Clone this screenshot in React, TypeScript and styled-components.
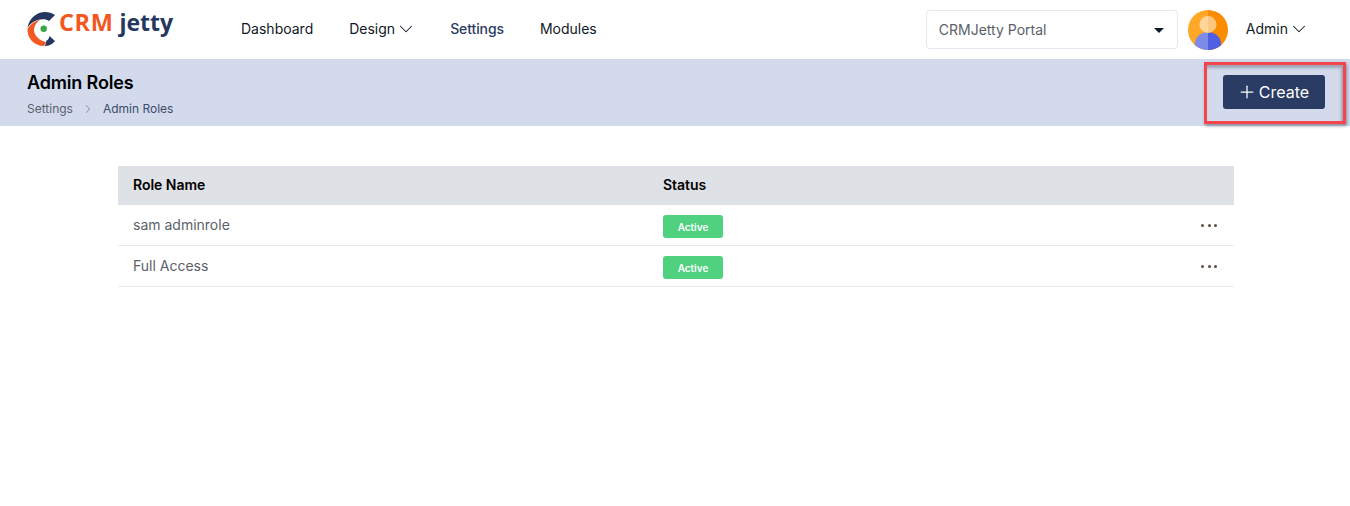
import React from 'react';
import styled, { createGlobalStyle } from 'styled-components';
import { ChevronDown, ChevronRight, Plus } from 'lucide-react';

const GlobalStyle = createGlobalStyle`
    html, body {
        margin: 0;
        padding: 0;
        background-color: #ffffff;
        font-family: Inter, "Noto Sans", sans-serif;
    }
    * {
        box-sizing: border-box;
    }
`;

const Page = styled.div`
    width: 1350px;
    height: 506px;
    overflow: hidden;
    background-color: #ffffff;
`;

const Header = styled.header`
    height: 59px;
    display: flex;
    align-items: center;
    padding-left: 27px;
`;

const Logo = styled.div`
    width: 214px;
    display: flex;
    align-items: flex-start;
    gap: 4px;
    height: 34px;
    margin-top: -1px;
`;

const LogoText = styled.span`
    display: flex;
    align-items: baseline;
    gap: 6px;
    margin-top: -3px;
    font-family: "Open Sans", sans-serif;
    font-weight: 700;
    line-height: 26px;
`;

const LogoCrm = styled.span`
    color: #f2581f;
    font-size: 23.5px;
    letter-spacing: 0.6px;
`;

const LogoJetty = styled.span`
    color: #26375f;
    font-size: 23px;
    letter-spacing: 0;
`;

const Nav = styled.nav`
    display: flex;
    align-items: center;
    gap: 36px;
    margin-top: -2px;
`;

const NavItem = styled.a<{ $active?: boolean }>`
    display: flex;
    align-items: center;
    font-size: 14px;
    line-height: 20px;
    font-weight: ${(p) => (p.$active ? 500 : 400)};
    letter-spacing: ${(p) => (p.$active ? '-0.1px' : '0')};
    color: ${(p) => (p.$active ? '#2a3b64' : '#111827')};
    cursor: pointer;
`;

const Chevron = styled(ChevronDown)`
    margin: 0 -3px 0 0;
`;

const HeaderRight = styled.div`
    margin-left: auto;
    display: flex;
    align-items: center;
    margin-right: 43px;
`;

const PortalSelect = styled.div`
    width: 252px;
    height: 39px;
    display: flex;
    align-items: center;
    justify-content: space-between;
    padding: 0 13px 0 12px;
    border: 1px solid #e8e8f3;
    border-radius: 4px;
    background-color: #ffffff;
    font-size: 14px;
    color: #5b5f6a;
`;

const Caret = styled.span`
    width: 0;
    height: 0;
    margin-top: 2px;
    border-left: 5px solid transparent;
    border-right: 5px solid transparent;
    border-top: 5px solid #0f172a;
`;

const Avatar = styled.svg`
    width: 40px;
    height: 40px;
    margin-left: 10px;
`;

const UserMenu = styled.div`
    display: flex;
    align-items: center;
    margin-left: 18px;
    margin-top: -2px;
    font-size: 14px;
    color: #111827;
`;

const SubHeader = styled.section`
    position: relative;
    height: 67px;
    display: flex;
    align-items: flex-start;
    justify-content: space-between;
    padding: 13px 25px 0 27px;
    background-color: #d2daec;
`;

const Title = styled.h1`
    margin: 0;
    font-size: 18px;
    line-height: 22px;
    font-weight: 600;
    letter-spacing: -0.15px;
    color: #000000;
`;

const Breadcrumbs = styled.div`
    display: flex;
    align-items: center;
    margin-top: 6px;
    font-size: 12px;
    line-height: 18px;
`;

const Crumb = styled.span<{ $current?: boolean }>`
    color: ${(p) => (p.$current ? '#3d4a68' : '#5b6270')};
`;

const CrumbSeparator = styled.span`
    display: flex;
    margin: 0 8px 0 8px;
    color: #6b7280;
`;

const CreateButton = styled.button`
    display: flex;
    align-items: center;
    justify-content: center;
    gap: 2px;
    width: 102px;
    height: 34px;
    margin-top: 3px;
    padding: 0 2px 0 0;
    border: 0;
    border-radius: 3px;
    background-color: #2a3b64;
    color: #ffffff;
    font-family: inherit;
    font-size: 16px;
    cursor: pointer;
`;

const Highlight = styled.div`
    position: absolute;
    left: 1204px;
    top: 3px;
    width: 142px;
    height: 62px;
    border: 3px solid #f4454d;
    box-shadow: 1px 2px 3px rgba(40, 40, 60, 0.45), inset -2px 3px 3px rgba(40, 40, 60, 0.3);
    pointer-events: none;
`;

const Content = styled.main`
    padding: 40px 116px 0 118px;
`;

const Table = styled.div`
    width: 1116px;
`;

const HeadRow = styled.div`
    height: 39px;
    display: grid;
    grid-template-columns: 530px 1fr;
    align-items: center;
    padding: 0 15px 2px;
    background-color: #dee1e6;
    font-size: 14px;
    font-weight: 600;
    letter-spacing: -0.02px;
    color: #000000;
`;

const Row = styled.div`
    height: 41px;
    display: grid;
    grid-template-columns: 530px 1fr 20px;
    align-items: center;
    padding: 0 15px 2px;
    border-bottom: 1px solid #e8e8f3;
    font-size: 14px;
    color: #5b5f6a;
`;

const Badge = styled.span`
    width: 60px;
    height: 23px;
    display: flex;
    align-items: center;
    justify-content: center;
    margin-top: 5px;
    border-radius: 3px;
    background-color: #4fd17f;
    color: #ffffff;
    font-size: 10px;
    font-weight: 600;
`;

const Dots = styled.div`
    display: flex;
    justify-content: flex-end;
    gap: 3.3px;
    padding-right: 2px;
    margin-top: 3px;
`;

const Dot = styled.span`
    width: 3px;
    height: 3px;
    background-color: #5e4c45;
    border-radius: 50%;
`;

const roles = ['sam adminrole', 'Full Access'];

const LogoMark = () => (
    <svg width="28" height="34" viewBox="0 0 28 34">
        <path d="M0.5 16 C2 6 10 0 18 0 C22 0 25 1 28 3 L22 9 C17 5.5 6 7 0.5 16 Z" fill="#26375f" />
        <path d="M0.5 17 C4 11 9 8.5 13 8 C7 12 6 18 8 22 C10 26 14 29 19 30 L17 34 C7 34 0 26 0.5 17 Z" fill="#f2581f" />
        <path d="M28 29 C25 33 21 34 18 34 L19.5 28.5 C21 28 22 26.5 22.5 24 Z" fill="#26375f" />
        <circle cx="16.7" cy="16.7" r="3.2" fill="#35a844" />
    </svg>
);

const App: React.FunctionComponent = () => {
    return (
        <Page>
            <GlobalStyle />
            <Header>
                <Logo>
                    <LogoMark />
                    <LogoText>
                        <LogoCrm>CRM</LogoCrm>
                        <LogoJetty>jetty</LogoJetty>
                    </LogoText>
                </Logo>
                <Nav>
                    <NavItem>Dashboard</NavItem>
                    <NavItem>
                        Design <Chevron size={22} strokeWidth={1.1} />
                    </NavItem>
                    <NavItem $active>Settings</NavItem>
                    <NavItem>Modules</NavItem>
                </Nav>
                <HeaderRight>
                    <PortalSelect>
                        CRMJetty Portal
                        <Caret />
                    </PortalSelect>
                    <Avatar viewBox="0 0 40 40">
                        <defs>
                            <clipPath id="avatar-clip">
                                <circle cx="20" cy="20" r="20" />
                            </clipPath>
                        </defs>
                        <g clipPath="url(#avatar-clip)">
                            <rect width="20" height="40" fill="#ffa726" />
                            <rect x="20" width="20" height="40" fill="#fb8c00" />
                            <path d="M7 40 V32 A13 12 0 0 1 20 22 V40 Z" fill="#7c8be8" />
                            <path d="M33 40 V32 A13 12 0 0 0 20 22 V40 Z" fill="#4f60e3" />
                            <path d="M20 6 A8 8 0 0 0 20 23 Z" fill="#ffd59a" />
                            <path d="M20 6 A8 8 0 0 1 20 23 Z" fill="#ffc680" />
                        </g>
                    </Avatar>
                    <UserMenu>
                        Admin <Chevron size={22} strokeWidth={1.1} />
                    </UserMenu>
                </HeaderRight>
            </Header>
            <SubHeader>
                <div>
                    <Title>Admin Roles</Title>
                    <Breadcrumbs>
                        <Crumb>Settings</Crumb>
                        <CrumbSeparator>
                            <ChevronRight size={14} strokeWidth={1.25} />
                        </CrumbSeparator>
                        <Crumb $current>Admin Roles</Crumb>
                    </Breadcrumbs>
                </div>
                <CreateButton>
                    <Plus size={20} strokeWidth={1.5} />
                    Create
                </CreateButton>
                <Highlight />
            </SubHeader>
            <Content>
                <Table>
                    <HeadRow>
                        <span>Role Name</span>
                        <span>Status</span>
                    </HeadRow>
                    {roles.map((role) => (
                        <Row key={role}>
                            <span>{role}</span>
                            <div>
                                <Badge>Active</Badge>
                            </div>
                            <Dots>
                                <Dot />
                                <Dot />
                                <Dot />
                            </Dots>
                        </Row>
                    ))}
                </Table>
            </Content>
        </Page>
    );
};

export default App;
